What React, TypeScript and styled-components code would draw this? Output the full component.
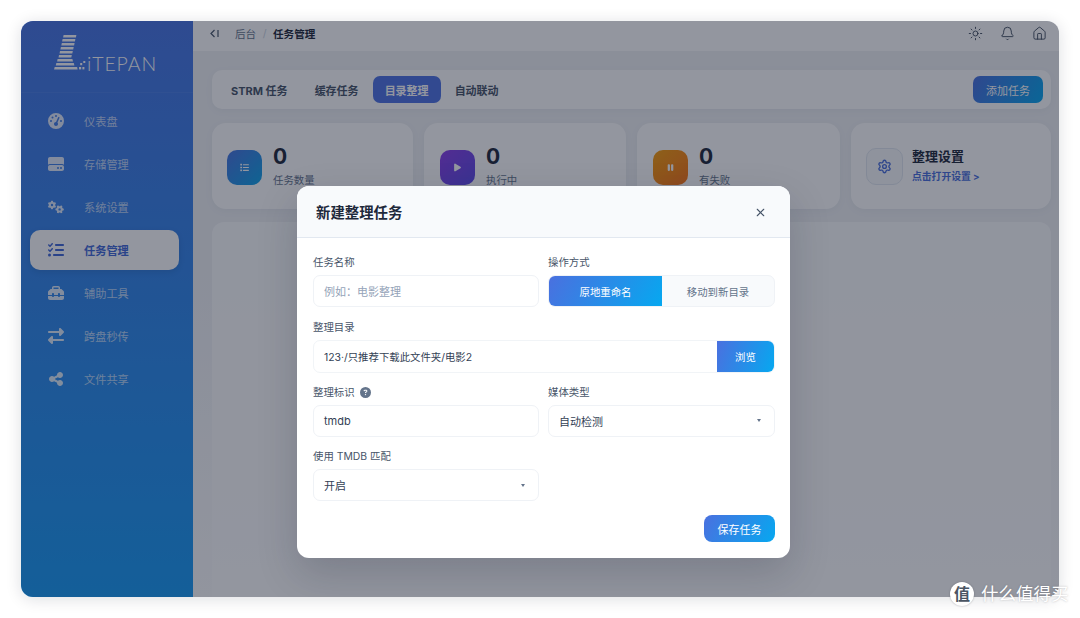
import React from "react";
import styled, { createGlobalStyle } from "styled-components";
import { FaGaugeHigh, FaHardDrive, FaGears, FaListCheck, FaToolbox, FaRightLeft, FaShareNodes, FaList, FaPlay, FaPause, FaCircleQuestion } from "react-icons/fa6";
import { Sun, Bell, Home, Settings, X } from "lucide-react";

const Global = createGlobalStyle`
  html, body { margin: 0; padding: 0; background: #fff; }
  body { font-family: Inter, "Noto Sans CJK SC", "Noto Sans", sans-serif; width: 1080px; height: 618px; overflow: hidden; }
  * { box-sizing: border-box; }
`;

const Page = styled.div`
  width: 1080px;
  height: 618px;
  padding: 21px;
  position: relative;
`;
const Win = styled.div`
  position: relative;
  width: 1038px;
  height: 576px;
  border-radius: 12px;
  overflow: hidden;
  display: flex;
  background: #f1f3f6;
`;
const WinShadow = styled.div`
  border-radius: 12px;
  box-shadow: 0 2px 16px rgba(15, 23, 42, 0.14);
  width: 1038px;
  height: 576px;
`;
const Sidebar = styled.aside`
  width: 172px;
  flex: none;
  background: linear-gradient(180deg, #4876e4 0%, #189bf5 100%);
  display: flex;
  flex-direction: column;
`;
const LogoBar = styled.div`
  height: 72px;
  border-bottom: 1px solid rgba(255, 255, 255, 0.05);
  display: flex;
  align-items: flex-end;
  padding: 0 0 21px 32px;
`;
const LogoText = styled.span`
  font-family: Lato, Inter, sans-serif;
  font-weight: 300;
  font-size: 19.5px;
  line-height: 15px;
  letter-spacing: 0.9px;
  color: #fff;
`;
const Nav = styled.nav`
  display: flex;
  flex-direction: column;
  gap: 3px;
  padding: 8px 14px 7px 9px;
`;
const NavItem = styled.div<{ $active?: boolean }>`
  height: 40px;
  border-radius: 10px;
  display: flex;
  align-items: center;
  padding: 0 0 1px 16px;
  font-size: 11.2px;
  font-weight: ${(p) => (p.$active ? 700 : 400)};
  color: ${(p) => (p.$active ? "#4169d8" : "rgba(255,255,255,0.68)")};
  background: ${(p) => (p.$active ? "#fff" : "transparent")};
  box-shadow: ${(p) => (p.$active ? "0 2px 6px rgba(15,23,42,.12)" : "none")};
`;
const NavIcon = styled.span`
  width: 20px;
  margin-right: 18px;
  display: flex;
  justify-content: center;
  font-size: 16px;
  color: #fff;
  opacity: 0.85;
  &.on { color: #4169d8; opacity: 1; }
`;
const Content = styled.div`
  flex: 1;
  display: flex;
  flex-direction: column;
  min-width: 0;
`;
const TopBar = styled.header`
  height: 30px;
  flex: none;
  background: #fff;
  display: flex;
  align-items: center;
  padding: 0 12px 6px 16px;
  font-size: 10.6px;
  box-shadow: 0 1px 4px rgba(15, 23, 42, 0.06);
`;
const Crumb = styled.span<{ $strong?: boolean }>`
  color: ${(p) => (p.$strong ? "#1e293b" : "#64748b")};
  font-weight: ${(p) => (p.$strong ? 700 : 400)};
`;
const Slash = styled.span`
  color: #cbd5e1;
  margin: 0 6.5px;
`;
const TopIcons = styled.div`
  margin-left: auto;
  display: flex;
  gap: 17px;
  color: #334155;
`;
const Main = styled.main`
  flex: 1;
  padding: 19px 8px 0 19px;
  display: flex;
  flex-direction: column;
  gap: 14px;
  background: linear-gradient(180deg, #f0f2f5 0%, #f0f2f5 40%, #fdfdfe 100%);
`;
const TabsCard = styled.div`
  height: 39px;
  flex: none;
  background: #fff;
  border-radius: 10px;
  display: flex;
  align-items: center;
  padding: 0 8px 0 6px;
  box-shadow: 0 2px 8px rgba(15, 23, 42, 0.04);
`;
const Tab = styled.div<{ $active?: boolean }>`
  height: 27px;
  padding: 0 ${(p) => (p.$active ? "12px" : "13px")};
  margin-right: 1px;
  border-radius: 7px;
  display: flex;
  align-items: center;
  font-size: 11px;
  font-weight: 700;
  color: ${(p) => (p.$active ? "#fff" : "#475569")};
  background: ${(p) => (p.$active ? "#4f74e3" : "transparent")};
`;
const AddBtn = styled.div`
  margin-left: auto;
  width: 70px;
  height: 27px;
  border-radius: 7px;
  background: linear-gradient(120deg, #4a70df, #06a8f0);
  color: #fff;
  font-size: 11px;
  display: flex;
  align-items: center;
  justify-content: center;
`;
const Stats = styled.div`
  display: grid;
  grid-template-columns: 201px 202px 203px 200px;
  gap: 11px;
  height: 86px;
  flex: none;
`;
const StatCard = styled.div`
  background: #fff;
  border-radius: 14px;
  display: flex;
  align-items: center;
  padding: 0 15px;
  box-shadow: 0 2px 10px rgba(15, 23, 42, 0.04);
  &:nth-child(2), &:nth-child(3) { padding-left: 16px; }
`;
const StatIcon = styled.div<{ $bg: string }>`
  width: 35px;
  height: 35px;
  border-radius: 10px;
  background: ${(p) => p.$bg};
  color: #fff;
  font-size: 9px;
  display: flex;
  align-items: center;
  justify-content: center;
  margin: 0 11px 0 0;
  position: relative;
  top: 1px;
`;
const StatText = styled.div`
  display: flex;
  flex-direction: column;
  gap: 2px;
  margin-top: 1px;
`;
const StatValue = styled.div`
  font-size: 21px;
  line-height: 26px;
  font-weight: 700;
  color: #1e293b;
`;
const StatLabel = styled.div`
  font-size: 10.4px;
  line-height: 17px;
  color: #64748b;
`;
const GearBox = styled.div`
  width: 37px;
  height: 37px;
  border-radius: 10px;
  border: 1px solid #e2e8f0;
  background: #f8fafc;
  color: #4a6fdc;
  display: flex;
  align-items: center;
  justify-content: center;
  margin-right: 9px;
`;
const SetTitle = styled.div`
  font-size: 13px;
  line-height: 18px;
  font-weight: 700;
  color: #1e293b;
`;
const SetLink = styled.div`
  font-size: 9.8px;
  line-height: 16px;
  font-weight: 700;
  color: #4a6fdc;
  margin-top: 4px;
`;
const EmptyCard = styled.div`
  flex: 1;
  background: #fff;
  border-radius: 12px 12px 0 0;
  margin-top: -1px;
  opacity: 0.8;
`;
const Overlay = styled.div`
  position: absolute;
  inset: 0;
  background: rgba(15, 23, 42, 0.45);
  padding: 165px 0 0 276px;
`;
const Modal = styled.div`
  width: 493px;
  height: 372px;
  background: #fff;
  border-radius: 12px;
  overflow: hidden;
  box-shadow: 0 16px 40px rgba(15, 23, 42, 0.18);
`;
const ModalHead = styled.div`
  height: 52px;
  background: #f8fafc;
  border-bottom: 1px solid #e2e8f0;
  display: flex;
  align-items: center;
  justify-content: space-between;
  padding: 2px 23px 0 19px;
`;
const ModalTitle = styled.div`
  font-size: 14.4px;
  font-weight: 700;
  color: #1e293b;
  margin-top: -2px;
`;
const ModalBody = styled.div`
  padding: 17px 15px 16px 16px;
`;
const FormGrid = styled.div`
  display: grid;
  grid-template-columns: 226px 227px;
  column-gap: 9px;
  row-gap: 12.8px;
`;
const Field = styled.div<{ $wide?: boolean }>`
  grid-column: ${(p) => (p.$wide ? "1 / 3" : "auto")};
  min-width: 0;
`;
const Label = styled.div`
  height: 16px;
  line-height: 16px;
  margin-bottom: 4px;
  font-size: 10.4px;
  color: #475569;
  display: flex;
  align-items: center;
  gap: 5px;
`;
const Control = styled.div<{ $muted?: boolean }>`
  height: 32px;
  border: 1px solid #eff2f6;
  border-radius: 7px;
  padding: 0 10px;
  display: flex;
  align-items: center;
  justify-content: space-between;
  font-size: 11px;
  color: ${(p) => (p.$muted ? "#94a3b8" : "#334155")};
  background: #fff;
`;
const Caret = styled.span`
  width: 0;
  height: 0;
  border-left: 2px solid transparent;
  border-right: 2px solid transparent;
  border-top: 3px solid #64748b;
  margin-right: 3px;
`;
const Segment = styled.div`
  height: 32px;
  display: grid;
  grid-template-columns: 113px 1fr;
  border: 1px solid #eff2f6;
  border-radius: 7px;
  overflow: hidden;
  background: #f8fafc;
`;
const SegBtn = styled.div<{ $active?: boolean }>`
  display: flex;
  align-items: center;
  justify-content: center;
  font-size: 10.4px;
  color: ${(p) => (p.$active ? "#fff" : "#64748b")};
  background: ${(p) => (p.$active ? "linear-gradient(120deg, #4a70df, #06a8f0)" : "transparent")};
`;
const PathRow = styled.div`
  height: 33px;
  display: flex;
  border: 1px solid #f1f4f7;
  border-radius: 7px;
  overflow: hidden;
  margin-bottom: -1px;
`;
const PathValue = styled.div`
  flex: 1;
  display: flex;
  align-items: center;
  padding: 0 10px;
  font-size: 10.4px;
  color: #334155;
`;
const Browse = styled.div`
  width: 57px;
  background: linear-gradient(110deg, #4a70df, #06a8f0);
  color: #fff;
  font-size: 10.4px;
  display: flex;
  align-items: center;
  justify-content: center;
`;
const Actions = styled.div`
  display: flex;
  justify-content: flex-end;
  margin-top: 14px;
`;
const Save = styled.div`
  width: 71px;
  height: 27px;
  border-radius: 8px;
  background: linear-gradient(120deg, #4a70df, #06a8f0);
  color: #fff;
  font-size: 11px;
  display: flex;
  align-items: center;
  justify-content: center;
`;
const Mark = styled.div`
  position: absolute;
  left: 950px;
  top: 582px;
  display: flex;
  align-items: center;
  gap: 7px;
  color: #fff;
  font-size: 17.5px;
  line-height: 24px;
  text-shadow: 0 0 2px rgba(60, 60, 70, 0.35);
`;
const MarkBadge = styled.span`
  width: 24px;
  height: 24px;
  border-radius: 50%;
  background: #fff;
  color: #4b5563;
  font-size: 16px;
  font-weight: 700;
  display: flex;
  align-items: center;
  justify-content: center;
  box-shadow: 0 0 2px rgba(60, 60, 70, 0.4);
  text-shadow: none;
`;

const LogoMark = () => (
  <svg width="34" height="37" viewBox="0 0 34 37" fill="#fff" style={{ display: "block" }}>
    <path d="M10.6 1H23.4l-.5 2.6H10.1z" />
    <path d="M9.6 5H22.4l-.5 2.6H9.1z" />
    <path d="M8.8 9h12.8l-.5 2.6H8.3z" />
    <path d="M7.9 13h12.8l-.5 2.6H7.4z" />
    <path d="M7 17h12.8l-.5 2.6H6.5z" />
    <path d="M6 21h12.8l-.5 2.6H5.5z" />
    <path d="M4.6 25h14.8l.6 2.6H4.1z" />
    <path d="M3.3 29h17.5l.6 2.6H2.8z" />
    <path d="M1.7 33h22.4l.5 2.6H1.1z" />
    <rect x="26" y="33" width="2.2" height="2.4" />
    <rect x="29.4" y="33" width="2" height="2.4" />
    <rect x="27.2" y="29" width="2" height="2.2" />
    <rect x="30.3" y="27" width="2" height="2" />
  </svg>
);

const BackIcon = () => (
  <svg width="11" height="11" viewBox="0 0 11 11" fill="none" stroke="#475569" strokeWidth="1.2" style={{ marginRight: 15 }}>
    <path d="M5.5 2 2 5.5 5.5 9" />
    <path d="M9 2v7" />
  </svg>
);

const navs = [
  { icon: <FaGaugeHigh />, label: "仪表盘" },
  { icon: <FaHardDrive />, label: "存储管理" },
  { icon: <FaGears />, label: "系统设置" },
  { icon: <FaListCheck />, label: "任务管理", active: true },
  { icon: <FaToolbox />, label: "辅助工具" },
  { icon: <FaRightLeft />, label: "跨盘秒传" },
  { icon: <FaShareNodes />, label: "文件共享" },
];

const stats = [
  { icon: <FaList />, bg: "linear-gradient(135deg,#4a74e0,#0ea5e9)", label: "任务数量" },
  { icon: <FaPlay />, bg: "linear-gradient(135deg,#8b3fe8,#5b4be8)", label: "执行中" },
  { icon: <FaPause />, bg: "linear-gradient(135deg,#f59e0b,#f97316)", label: "有失败" },
];

export default function App() {
  return (
    <Page>
      <Global />
      <WinShadow>
        <Win>
          <Sidebar>
            <LogoBar>
              <LogoMark />
              <LogoText>iTEPAN</LogoText>
            </LogoBar>
            <Nav>
              {navs.map((n) => (
                <NavItem key={n.label} $active={n.active}>
                  <NavIcon className={n.active ? "on" : ""}>{n.icon}</NavIcon>
                  {n.label}
                </NavItem>
              ))}
            </Nav>
          </Sidebar>
          <Content>
            <TopBar>
              <BackIcon />
              <Crumb>后台</Crumb>
              <Slash>/</Slash>
              <Crumb $strong>任务管理</Crumb>
              <TopIcons>
                <Sun size={15} strokeWidth={1.4} />
                <Bell size={15} strokeWidth={1.4} />
                <Home size={15} strokeWidth={1.4} />
              </TopIcons>
            </TopBar>
            <Main>
              <TabsCard>
                <Tab>STRM 任务</Tab>
                <Tab>缓存任务</Tab>
                <Tab $active>目录整理</Tab>
                <Tab>自动联动</Tab>
                <AddBtn>添加任务</AddBtn>
              </TabsCard>
              <Stats>
                {stats.map((s) => (
                  <StatCard key={s.label}>
                    <StatIcon $bg={s.bg}>{s.icon}</StatIcon>
                    <StatText>
                      <StatValue>0</StatValue>
                      <StatLabel>{s.label}</StatLabel>
                    </StatText>
                  </StatCard>
                ))}
                <StatCard>
                  <GearBox>
                    <Settings size={15} strokeWidth={2.2} />
                  </GearBox>
                  <div>
                    <SetTitle>整理设置</SetTitle>
                    <SetLink>点击打开设置 &gt;</SetLink>
                  </div>
                </StatCard>
              </Stats>
              <EmptyCard />
            </Main>
          </Content>
          <Overlay>
            <Modal>
              <ModalHead>
                <ModalTitle>新建整理任务</ModalTitle>
                <X size={13} color="#475569" strokeWidth={2} />
              </ModalHead>
              <ModalBody>
                <FormGrid>
                  <Field>
                    <Label>任务名称</Label>
                    <Control $muted>例如：电影整理</Control>
                  </Field>
                  <Field>
                    <Label>操作方式</Label>
                    <Segment>
                      <SegBtn $active>原地重命名</SegBtn>
                      <SegBtn>移动到新目录</SegBtn>
                    </Segment>
                  </Field>
                  <Field $wide>
                    <Label>整理目录</Label>
                    <PathRow>
                      <PathValue>123·/只推荐下载此文件夹/电影2</PathValue>
                      <Browse>浏览</Browse>
                    </PathRow>
                  </Field>
                  <Field>
                    <Label>
                      整理标识
                      <FaCircleQuestion size={11} color="#64748b" />
                    </Label>
                    <Control>tmdb</Control>
                  </Field>
                  <Field>
                    <Label>媒体类型</Label>
                    <Control>
                      自动检测
                      <Caret />
                    </Control>
                  </Field>
                  <Field>
                    <Label>使用 TMDB 匹配</Label>
                    <Control>
                      开启
                      <Caret />
                    </Control>
                  </Field>
                </FormGrid>
                <Actions>
                  <Save>保存任务</Save>
                </Actions>
              </ModalBody>
            </Modal>
          </Overlay>
        </Win>
      </WinShadow>
      <Mark>
        <MarkBadge>值</MarkBadge>
        什么值得买
      </Mark>
    </Page>
  );
}
